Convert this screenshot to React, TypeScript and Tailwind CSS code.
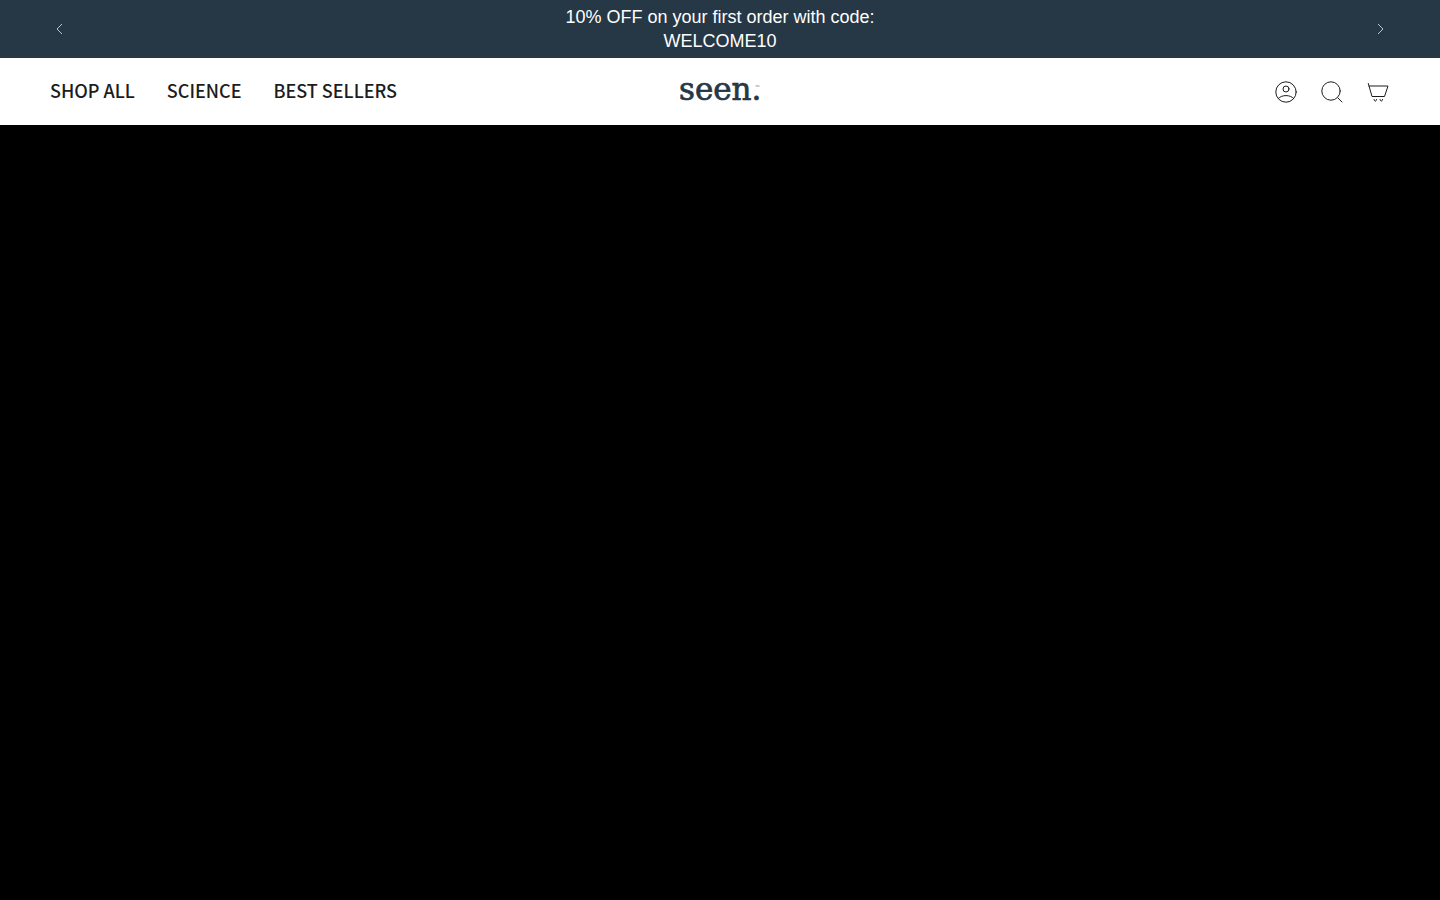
import { ReactNode } from "react";

const links = ["Shop all", "Science", "Best sellers"];

function Icon({ children }: { children: ReactNode }) {
  return (
    <svg className="size-6" viewBox="0 0 24 24" fill="none" stroke="currentColor" strokeWidth="1" strokeLinecap="round" strokeLinejoin="round" aria-hidden="true">
      {children}
    </svg>
  );
}

function Logo() {
  return (
    <svg className="h-6 w-20 overflow-visible font-['DejaVu_Serif',serif]" viewBox="0 0 80 24" fill="#263746" stroke="#263746">
      <text x="-1" y="20" fontSize="31" strokeWidth="0.7">seen.</text>
      <path d="M75.500 6h4" strokeWidth="1" strokeOpacity="0.5" />
    </svg>
  );
}

function AnnouncementBar() {
  return (
    <div className="flex items-center justify-between bg-[#263746] px-12 py-1 text-white">
      <button aria-label="Previous" className="flex size-6 items-center justify-center">
        <svg className="size-3" viewBox="0 0 12 12" fill="none" stroke="currentColor" strokeWidth="0.7" aria-hidden="true">
          <path d="M8 1 3 6l5 5" />
        </svg>
      </button>
      <p className="w-80 py-px text-center font-['Liberation_Sans',Arial,sans-serif] text-lg/6">
        10% OFF on your first order with code: WELCOME10
      </p>
      <button aria-label="Next" className="flex size-6 items-center justify-center">
        <svg className="size-3" viewBox="0 0 12 12" fill="none" stroke="currentColor" strokeWidth="0.7" aria-hidden="true">
          <path d="m4 1 5 5-5 5" />
        </svg>
      </button>
    </div>
  );
}

function Header() {
  return (
    <header className="grid h-[67px] grid-cols-[1fr_auto_1fr] items-center bg-white px-[50px] text-[#1c1c1c]">
      <nav className="flex gap-8 pb-[3px] font-['Noto_Sans_CJK_SC',sans-serif] text-lg/6 font-medium">
        {links.map(label => (
          <a key={label} href="#" className="uppercase whitespace-nowrap">{label}</a>
        ))}
      </nav>
      <a href="#" aria-label="seen. home">
        <Logo />
      </a>
      <div className="flex justify-end gap-[22px]">
        <a href="#" aria-label="Account">
          <Icon>
            <circle cx="12" cy="12" r="10.2" />
            <circle cx="12" cy="9" r="3" />
            <path d="M4.2 18.6c2-2 4.6-3 7.8-3s5.8 1 7.8 3" />
          </Icon>
        </a>
        <button aria-label="Search">
          <Icon>
            <circle cx="11" cy="11" r="9.2" />
            <path d="m18 18 4 4" />
          </Icon>
        </button>
        <a href="#" aria-label="Cart">
          <Icon>
            <path d="M2.3 3.5 6 16.5h12.5L22 6H3" />
            <path d="M8 19.5q.3 1.6 1.3 1.6t1.3-1.6M14 19.5q.3 1.6 1.3 1.6t1.3-1.6" />
          </Icon>
        </a>
      </div>
    </header>
  );
}

export default function App() {
  return (
    <div className="flex min-h-screen flex-col bg-black">
      <AnnouncementBar />
      <Header />
      <main className="flex-1 bg-black" />
    </div>
  );
}
